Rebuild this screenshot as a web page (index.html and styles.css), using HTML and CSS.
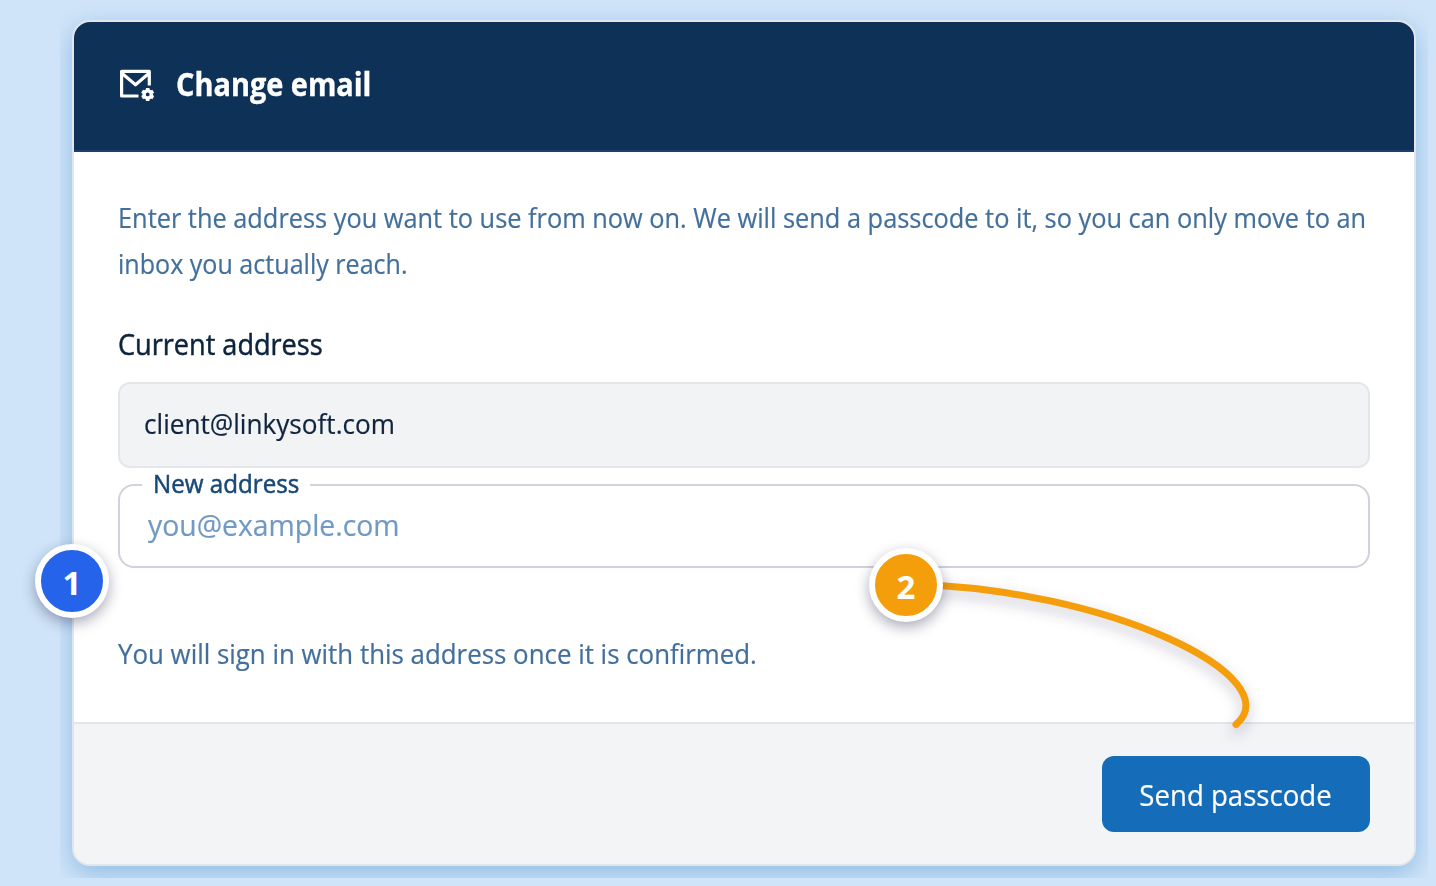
FILE: index.html
```html
<!DOCTYPE html>
<html lang="en">
<head>
<meta charset="utf-8">
<title>Change email</title>
<link rel="stylesheet" href="styles.css">
</head>
<body>
<div class="shade">
  <main class="card">
    <header class="card-header">
      <svg class="mail-icon" width="38" height="36" viewBox="0 0 38 36" fill="none" stroke="#fff" stroke-width="3.2">
        <path d="M20.5 28H3.6V3.4H31.3V17.5M3.6 5L17.5 16.8L31.3 5" stroke-linejoin="round"/>
        <circle cx="29.7" cy="26.4" r="3.6" stroke-width="3.4"/>
        <path d="M29.7 19.9v2.4M29.7 30.5v2.4M24.1 23.2l2 1.2M33.3 28.4l2 1.2M24.1 29.6l2-1.2M33.3 24.4l2-1.2" stroke-width="3.6"/>
      </svg>
      <h1 class="title"><span class="fit t-title">Change email</span></h1>
    </header>
    <section class="card-body">
      <p class="intro"><span class="fit t-intro1">Enter the address you want to use from now on. We will send a passcode to it, so you can only move to an</span><br><span class="fit t-intro2">inbox you actually reach.</span></p>
      <h2 class="label"><span class="fit t-label">Current address</span></h2>
      <div class="readonly"><span class="fit t-current">client@linkysoft.com</span></div>
      <div class="field">
        <label class="field-label"><span class="fit t-new">New address</span></label>
        <span class="placeholder fit t-place">you@example.com</span>
      </div>
      <p class="hint"><span class="fit t-hint">You will sign in with this address once it is confirmed.</span></p>
    </section>
    <footer class="card-footer">
      <button class="send"><span class="fit t-send">Send passcode</span></button>
    </footer>
  </main>
</div>
<svg class="connector" width="1436" height="886" viewBox="0 0 1436 886" fill="none">
  <path d="M906 584C1110 588 1291 678 1236 724.5" stroke="#f59e0b" stroke-width="7" stroke-linecap="round"/>
</svg>
<div class="pin pin-one">1</div>
<div class="pin pin-two">2</div>
</body>
</html>
```
FILE: styles.css
```css
* { box-sizing: border-box; }
body {
  margin: 0;
  height: 886px;
  overflow: hidden;
  position: relative;
  background: #cfe4f8;
  font-family: "Open Sans", "Noto Sans", sans-serif;
  font-stretch: 90%;
}
h1, h2, p { margin: 0; font-weight: inherit; white-space: nowrap; }

/* Slightly condensed text */
.fit { display: inline-block; transform-origin: left center; -webkit-text-stroke: .2px; }
.t-title { transform: scaleX(.876); -webkit-text-stroke: .4px; }
.t-intro1 { transform: scaleX(.939); }
.t-intro2 { transform: scaleX(.929); }
.t-label { transform: scaleX(.903); -webkit-text-stroke: .5px; }
.t-current { transform: scaleX(.969); }
.t-new { transform: scaleX(.967); -webkit-text-stroke: .5px; }
.t-place { transform: scaleX(.945); }
.t-hint { transform: scaleX(.958); }
.t-send { transform: scaleX(.92); transform-origin: center; }

.shade {
  width: 1368px;
  height: 878px;
  margin-left: 60px;
  padding: 20px 12px 12px;
  overflow: hidden;
}
.card {
  height: 846px;
  display: flex;
  flex-direction: column;
  border: 2px solid #e2e6ec;
  border-radius: 18px;
  overflow: hidden;
  background: #fff;
  box-shadow: 0 8px 24px rgba(20, 110, 190, .32);
}
.card-header {
  height: 130px;
  display: flex;
  align-items: center;
  gap: 20px;
  padding: 0 44px 4px;
  background: #0e3157;
  border-bottom: 2px solid #1d4267;
}
.mail-icon { margin-top: 4px; }
.title { padding-bottom: 2px; color: #fff; font-size: 33px; font-weight: 700; }
.card-body { flex: 1; padding: 43px 44px 0; }
.intro { height: 92px; color: #426f9c; font-size: 27px; line-height: 46px; }
.label { margin-top: 34px; color: #0c233c; font-size: 30px; font-weight: 500; line-height: 46px; }
.readonly {
  height: 86px;
  margin-top: 15px;
  padding: 0 24px 3px;
  display: flex;
  align-items: center;
  border: 2px solid #e4e6ea;
  border-radius: 12px;
  background: #f2f3f5;
  color: #10253d;
  font-size: 27px;
}
.field {
  position: relative;
  height: 84px;
  margin-top: 16px;
  padding: 0 28px 4px;
  display: flex;
  align-items: center;
  border: 2px solid #d1d3da;
  border-radius: 16px;
}
.field-label {
  position: absolute;
  top: -18px;
  left: 22px;
  width: 168px;
  padding-left: 11px;
  background: #fff;
  color: #184876;
  font-size: 25px;
  font-weight: 500;
  line-height: 30px;
  white-space: nowrap;
}
.placeholder { color: #7099c4; font-size: 30px; }
.hint { margin-top: 63px; color: #426f9c; font-size: 27px; line-height: 46px; }
.card-footer {
  height: 142px;
  padding: 0 44px;
  display: flex;
  align-items: center;
  justify-content: flex-end;
  background: #f2f4f6;
  border-top: 2px solid #e3e6e9;
}
.send {
  width: 268px;
  height: 76px;
  padding: 0;
  border: 0;
  border-radius: 12px;
  background: #156cb9;
  color: #fff;
  font: inherit;
  font-size: 30px;
  white-space: nowrap;
}
.connector {
  position: absolute;
  inset: 0;
  filter: drop-shadow(0 6px 7px rgba(20, 20, 70, .25));
}
.pin {
  position: absolute;
  width: 74px;
  height: 74px;
  display: flex;
  align-items: center;
  justify-content: center;
  padding-top: 3px;
  border: 6px solid #fff;
  border-radius: 50%;
  color: #fff;
  font-size: 33px;
  font-weight: 700;
  line-height: 1;
  box-shadow: 0 5px 14px rgba(20, 20, 60, .36);
}
.pin-one { left: 35px; top: 544px; background: #2563eb; }
.pin-two { left: 869px; top: 547.5px; background: #f59e0b; }
```
